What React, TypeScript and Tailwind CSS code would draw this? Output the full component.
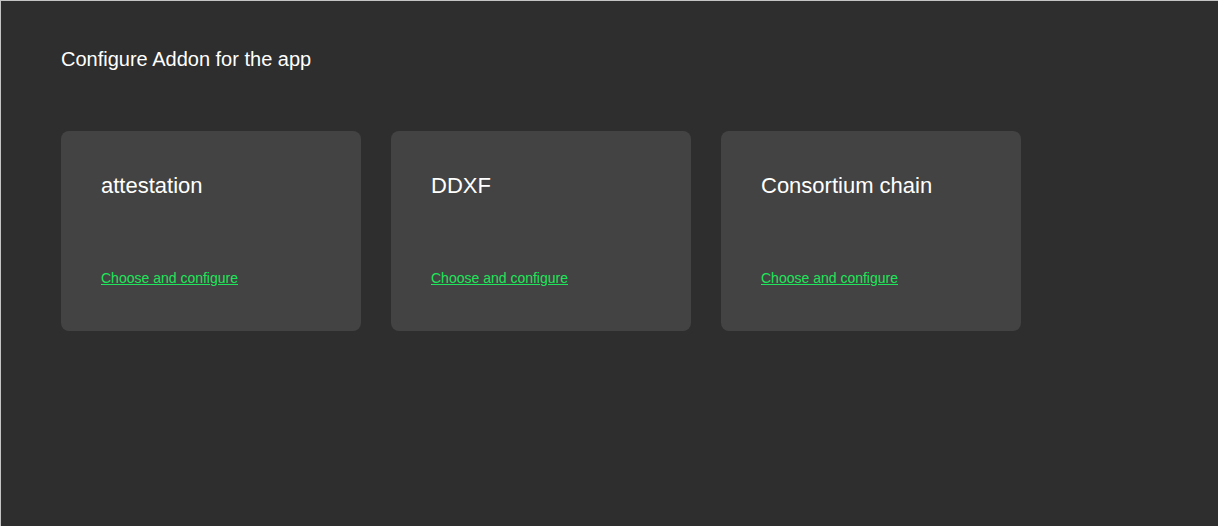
const addons = ['attestation', 'DDXF', 'Consortium chain'];

const AddonCard = ({ name }: { name: string }) => {
    return (
        <div className="flex h-[200px] w-[300px] flex-col rounded-lg bg-[#434343] px-10 pt-10">
            <div className="text-[22px] leading-[30px] text-white">{name}</div>
            <a href="#" className="mt-[67px] text-sm leading-5 text-[#1ee65a] underline">
                Choose and configure
            </a>
        </div>
    );
};

export default function App() {
    return (
        <div
            className="min-h-[526px] border-l border-t border-[#c4c4c4] bg-[#2e2e2e] pl-[60px] pt-[44px]"
            style={{ fontFamily: '"Liberation Sans", Arial, sans-serif' }}
        >
            <h1 className="text-xl leading-7 text-white">Configure Addon for the app</h1>
            <div className="mt-[58px] flex gap-[30px]">
                {addons.map((a) => (
                    <AddonCard key={a} name={a} />
                ))}
            </div>
        </div>
    );
}
